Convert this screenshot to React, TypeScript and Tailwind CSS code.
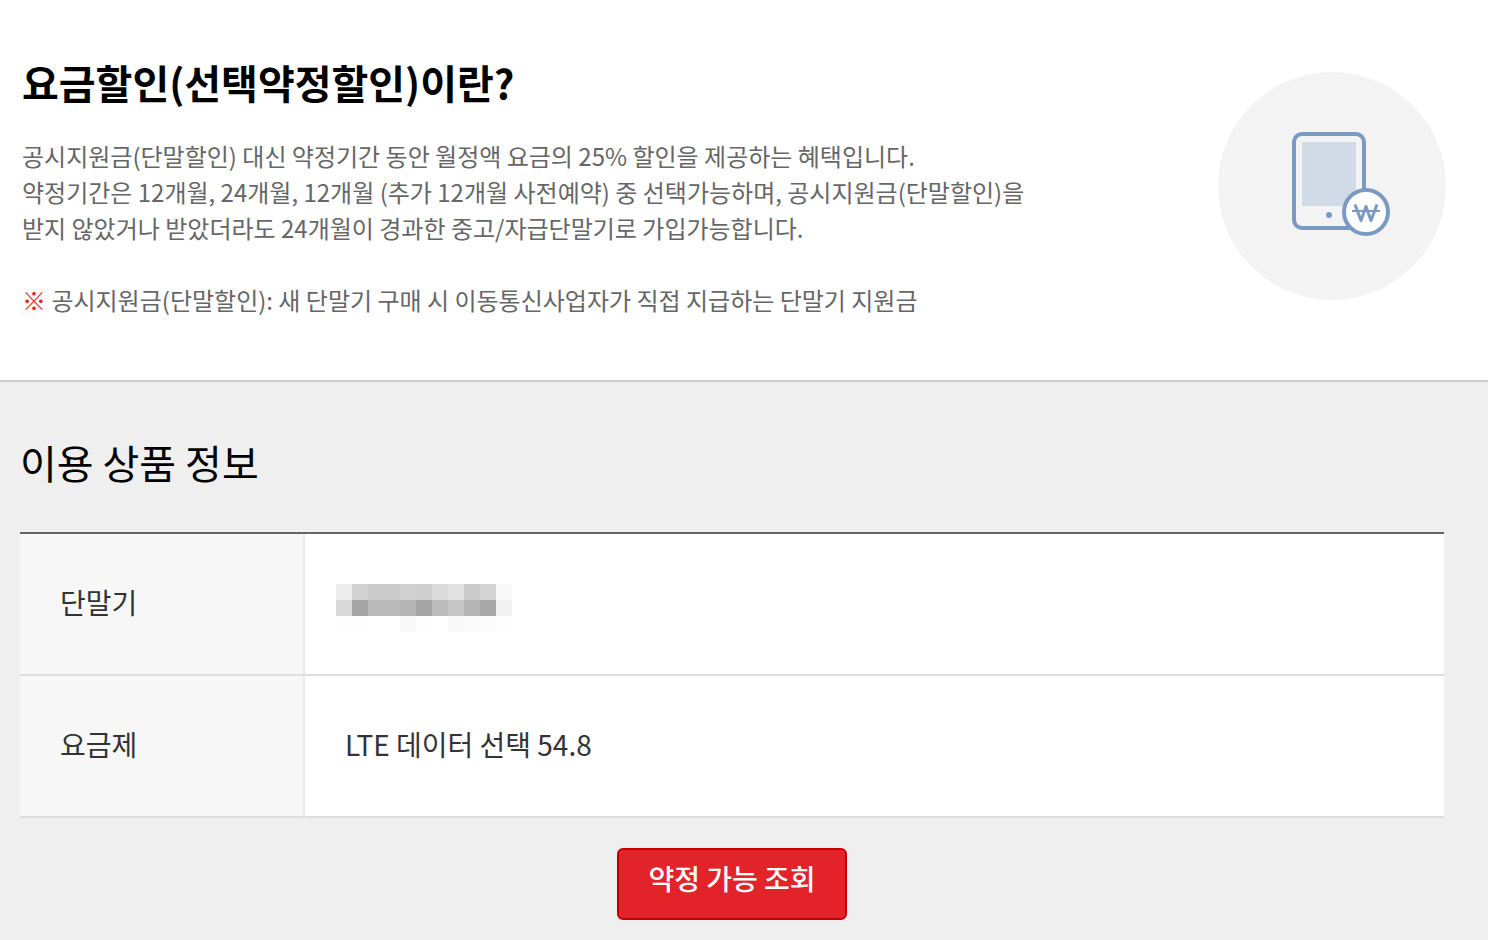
const fontFamily = "font-['Noto_Sans_CJK_KR','Noto_Sans',sans-serif]";

// grey tiles that hide the customer's device name, row by row
const mosaic = [
  ['#ededed', '#d2d2d2', '#cbcbcb', '#cccccc', '#d1d1d1', '#cecece', '#dadada', '#e2e2e2', '#cccccc', '#d4d4d4', '#f9f9f9'],
  ['#d9d9d9', '#a5a5a5', '#bababa', '#bababa', '#b5b5b5', '#a5a5a5', '#bcbcbc', '#c6c6c6', '#b5b5b5', '#a8a8a8', '#f1f1f1'],
  ['#fdfdfd', '#fdfdfd', '#ffffff', '#ffffff', '#f8f8f8', '#fefefe', '#ffffff', '#f8f8f8', '#fbfbfb', '#fcfcfc', '#fefefe'],
];

function PhoneWonIcon() {
  return (
    <svg viewBox="0 0 228 228" className="w-[228px] h-[228px] shrink-0" aria-hidden="true">
      <circle cx="114" cy="114" r="114" fill="#f3f3f3" />
      <rect x="76" y="62" width="70" height="94" rx="8" fill="none" stroke="#7b9ac3" strokeWidth="4" />
      <rect x="84" y="70" width="54" height="64" fill="#d1dbe7" />
      <circle cx="111" cy="143" r="3" fill="#7b9ac3" />
      <circle cx="148" cy="140" r="22" fill="#fff" stroke="#7b9ac3" strokeWidth="4" />
      <path d="M137 132.5 L143 148.5 L148 134.5 L153 148.5 L159 132.5" fill="none" stroke="#7b9ac3" strokeWidth="3" strokeLinejoin="round" />
      <path d="M134 139H162" fill="none" stroke="#7b9ac3" strokeWidth="2" />
    </svg>
  );
}

function Mosaic() {
  return (
    <div className="grid w-44 grid-cols-11" role="img" aria-label="단말기">
      {mosaic.flat().map((color, idx) => (
        <span key={idx} className="h-4" style={{ backgroundColor: color }} />
      ))}
    </div>
  );
}

export default function App() {
  return (
    <main className={`min-h-screen bg-[#efefef] text-black ${fontFamily}`}>
      <section className="flex items-start justify-between border-b-2 border-[#cccccc] bg-white pt-[52px] pb-[62px] pl-[22px] pr-[42px]">
        <div>
          <h1 className="text-[40px] leading-[60px] font-bold">요금할인(선택약정할인)이란?</h1>
          <p className="mt-[26px] text-[24px] leading-[36px] text-[#666666]">
            공시지원금(단말할인) 대신 약정기간 동안 월정액 요금의 25% 할인을 제공하는 혜택입니다.
            <br />
            약정기간은 12개월, 24개월, 12개월 (추가 12개월 사전예약) 중 선택가능하며, 공시지원금(단말할인)을
            <br />
            받지 않았거나 받았더라도 24개월이 경과한 중고/자급단말기로 가입가능합니다.
          </p>
          <p className="mt-9 text-[24px] leading-[36px] text-[#666666]">
            <span className="text-[#e22329]">※</span> 공시지원금(단말할인): 새 단말기 구매 시 이동통신사업자가 직접 지급하는 단말기 지원금
          </p>
        </div>
        <div className="pt-5">
          <PhoneWonIcon />
        </div>
      </section>

      <section className="pt-[50px] pb-5 pl-5 pr-11">
        <h2 className="text-[40px] leading-[60px] font-normal">이용 상품 정보</h2>
        <table className="mt-10 w-full table-fixed border-separate border-spacing-0 border-t-2 border-[#666666] text-left text-[28px] leading-[40px] text-[#333333]">
          <tbody>
            <tr className="h-[142px]">
              <th scope="row" className="w-[285px] border-r-2 border-b-2 border-r-[#e8e8e8] border-b-[#dddddd] bg-[#f7f7f7] pb-1 pl-10 font-normal">
                단말기
              </th>
              <td className="border-b-2 border-[#dddddd] bg-white pt-2 pl-[31px]">
                <Mosaic />
              </td>
            </tr>
            <tr className="h-[142px]">
              <th scope="row" className="border-r-2 border-b-2 border-r-[#e8e8e8] border-b-[#dddddd] bg-[#f7f7f7] pb-1 pl-10 font-normal">
                요금제
              </th>
              <td className="border-b-2 border-[#dddddd] bg-white pb-1 pl-10">LTE 데이터 선택 54.8</td>
            </tr>
          </tbody>
        </table>
        <div className="mt-[30px] flex justify-center">
          <button
            type="button"
            className="h-[72px] w-[230px] rounded-md border-2 border-[#c40000] bg-[#e22329] pb-3 text-[28px] leading-[40px] font-medium text-white"
          >
            약정 가능 조회
          </button>
        </div>
      </section>
    </main>
  );
}
